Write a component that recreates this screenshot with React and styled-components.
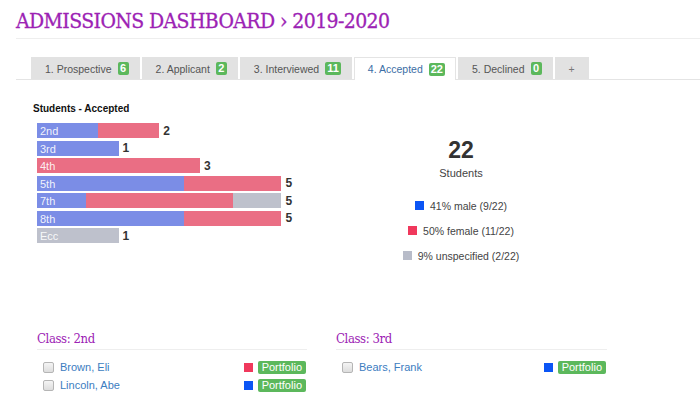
import React from 'react';
import styled, { createGlobalStyle } from 'styled-components';

const GlobalStyle = createGlobalStyle`
  body {
    margin: 0;
    background: #fff;
    font-family: 'Liberation Sans', Arial, sans-serif;
    color: #333;
  }
`;

const COLORS = {
  male: '#7b8de6',
  female: '#ea6e84',
  unspec: '#bec1cc',
};

const LEGEND = {
  male: '#0b55f5',
  female: '#f0385c',
  unspec: '#b8bcc9',
};

const tabs = [
  { label: '1. Prospective', count: 6 },
  { label: '2. Applicant', count: 2 },
  { label: '3. Interviewed', count: 11 },
  { label: '4. Accepted', count: 22, active: true },
  { label: '5. Declined', count: 0 },
];

const grades = [
  { label: '2nd', male: 1, female: 1, unspec: 0 },
  { label: '3rd', male: 1, female: 0, unspec: 0 },
  { label: '4th', male: 0, female: 3, unspec: 0 },
  { label: '5th', male: 3, female: 2, unspec: 0 },
  { label: '7th', male: 1, female: 3, unspec: 1 },
  { label: '8th', male: 3, female: 2, unspec: 0 },
  { label: 'Ecc', male: 0, female: 0, unspec: 1 },
];

const classes = [
  {
    name: 'Class: 2nd',
    students: [
      { name: 'Brown, Eli', gender: 'female' },
      { name: 'Lincoln, Abe', gender: 'male' },
    ],
  },
  {
    name: 'Class: 3rd',
    students: [{ name: 'Bears, Frank', gender: 'male' }],
  },
];

const Page = styled.div`
  padding: 8px 0 0 16px;
`;

const Title = styled.h1`
  margin: 0;
  padding: 0 0 4px;
  font-family: 'DejaVu Serif', serif;
  font-stretch: condensed;
  font-weight: normal;
  font-size: 21px;
  letter-spacing: -0.6px;
  color: #9c22b4;
  border-bottom: 1px solid #eee;
  line-height: 26px;
  -webkit-text-stroke: 0.3px #9c22b4;
`;

const TabBar = styled.div`
  display: flex;
  gap: 2px;
  margin-top: 18px;
  padding-left: 15px;
  border-bottom: 1px solid #e4e4e4;
`;

const Tab = styled.div`
  display: flex;
  align-items: center;
  gap: 6px;
  padding: 0 10px 0 13px;
  font-size: 10.5px;
  color: ${(p) => (p.$active ? '#3b6ea5' : '#555')};
  background: ${(p) => (p.$active ? '#fff' : '#e2e2e2')};
  border: 1px solid ${(p) => (p.$active ? '#e4e4e4' : '#e2e2e2')};
  border-bottom: none;
  margin-bottom: ${(p) => (p.$active ? '-1px' : '0')};
  height: ${(p) => (p.$active ? '22px' : '21px')};
`;

const Badge = styled.span`
  display: inline-block;
  background: #5cb85c;
  color: #fff;
  font-weight: bold;
  font-size: 11px;
  line-height: 13px;
  padding: 0 2px;
  border-radius: 2px;
  min-width: 7px;
  text-align: center;
`;

const PlusTab = styled(Tab)`
  padding: 0 13px;
  color: #777;
`;

const Overview = styled.div`
  display: flex;
  padding: 23px 0 0 17px;
`;

const Chart = styled.div`
  width: 290px;
`;

const ChartTitle = styled.div`
  font-size: 10px;
  font-weight: bold;
  color: #111;
  margin-bottom: 8px;
  line-height: 12px;
`;

const Bars = styled.div`
  display: flex;
  flex-direction: column;
  gap: 2.5px;
  padding-left: 4px;
`;

const BarRow = styled.div`
  display: flex;
  align-items: center;
  height: 15px;
`;

const Bar = styled.div`
  position: relative;
  display: flex;
  height: 15px;
`;

const Segment = styled.div`
  height: 100%;
  background: ${(p) => COLORS[p.$kind]};
`;

const BarLabel = styled.span`
  position: absolute;
  left: 3px;
  top: 0;
  line-height: 16px;
  font-size: 11px;
  color: rgba(255, 255, 255, 0.9);
`;

const BarValue = styled.span`
  margin-left: 4px;
  font-size: 12px;
  font-weight: bold;
  color: #333;
`;

const Summary = styled.div`
  width: 200px;
  margin-left: 38px;
  padding-top: 34px;
  display: flex;
  flex-direction: column;
  align-items: center;
`;

const Total = styled.div`
  font-size: 23px;
  font-weight: bold;
  color: #333;
  line-height: 26px;
`;

const TotalLabel = styled.div`
  font-size: 11px;
  color: #444;
  margin-top: 4px;
  margin-bottom: 14px;
`;

const LegendItem = styled.div`
  display: flex;
  align-items: center;
  gap: 6px;
  font-size: 10.5px;
  color: #444;
  height: 25px;
`;

const Swatch = styled.span`
  display: inline-block;
  width: 9px;
  height: 9px;
  background: ${(p) => LEGEND[p.$kind]};
`;

const ClassGrid = styled.div`
  display: grid;
  grid-template-columns: 270px 271px;
  column-gap: 29px;
  padding: 63px 0 0 21px;
`;

const ClassName = styled.h2`
  margin: 0;
  font-family: 'DejaVu Serif', serif;
  font-stretch: condensed;
  font-weight: normal;
  font-size: 13px;
  letter-spacing: -0.4px;
  color: #9c22b4;
  line-height: 16px;
  padding-bottom: 2px;
  border-bottom: 1px solid #eee;
`;

const StudentList = styled.div`
  padding-top: 8px;
`;

const StudentRow = styled.div`
  display: flex;
  align-items: center;
  height: 18px;
  padding-left: 6px;
`;

const Check = styled.span`
  width: 9px;
  height: 9px;
  border: 1px solid #b5b5b5;
  border-radius: 2px;
  background: linear-gradient(#f4f4f4, #ddd);
  margin-right: 6px;
`;

const StudentName = styled.a`
  flex: 1;
  font-size: 11px;
  color: #3c7dbf;
  text-decoration: none;
`;

const Portfolio = styled(Badge)`
  font-weight: normal;
  padding: 0 4px;
  margin-left: 5px;
  margin-right: 1px;
`;

const unit = 40.75;

const App = () => {
  return (
    <Page>
      <GlobalStyle />
      <Title>ADMISSIONS DASHBOARD › 2019-2020</Title>
      <TabBar>
        {tabs.map((t) => (
          <Tab key={t.label} $active={t.active}>
            {t.label}
            <Badge>{t.count}</Badge>
          </Tab>
        ))}
        <PlusTab>+</PlusTab>
      </TabBar>
      <Overview>
        <Chart>
          <ChartTitle>Students - Accepted</ChartTitle>
          <Bars>
            {grades.map((g) => {
              const total = g.male + g.female + g.unspec;
              const width = unit * (total + 1);
              return (
                <BarRow key={g.label}>
                  <Bar style={{ width }}>
                    {['male', 'female', 'unspec'].map((k) =>
                      g[k] ? (
                        <Segment
                          key={k}
                          $kind={k}
                          style={{ width: (width * g[k]) / total }}
                        />
                      ) : null
                    )}
                    <BarLabel>{g.label}</BarLabel>
                  </Bar>
                  <BarValue>{total}</BarValue>
                </BarRow>
              );
            })}
          </Bars>
        </Chart>
        <Summary>
          <Total>22</Total>
          <TotalLabel>Students</TotalLabel>
          <LegendItem>
            <Swatch $kind="male" />
            41% male (9/22)
          </LegendItem>
          <LegendItem>
            <Swatch $kind="female" />
            50% female (11/22)
          </LegendItem>
          <LegendItem>
            <Swatch $kind="unspec" />
            9% unspecified (2/22)
          </LegendItem>
        </Summary>
      </Overview>
      <ClassGrid>
        {classes.map((c) => (
          <div key={c.name}>
            <ClassName>{c.name}</ClassName>
            <StudentList>
              {c.students.map((s) => (
                <StudentRow key={s.name}>
                  <Check />
                  <StudentName href="#">{s.name}</StudentName>
                  <Swatch $kind={s.gender} />
                  <Portfolio>Portfolio</Portfolio>
                </StudentRow>
              ))}
            </StudentList>
          </div>
        ))}
      </ClassGrid>
    </Page>
  );
};

export default App;
